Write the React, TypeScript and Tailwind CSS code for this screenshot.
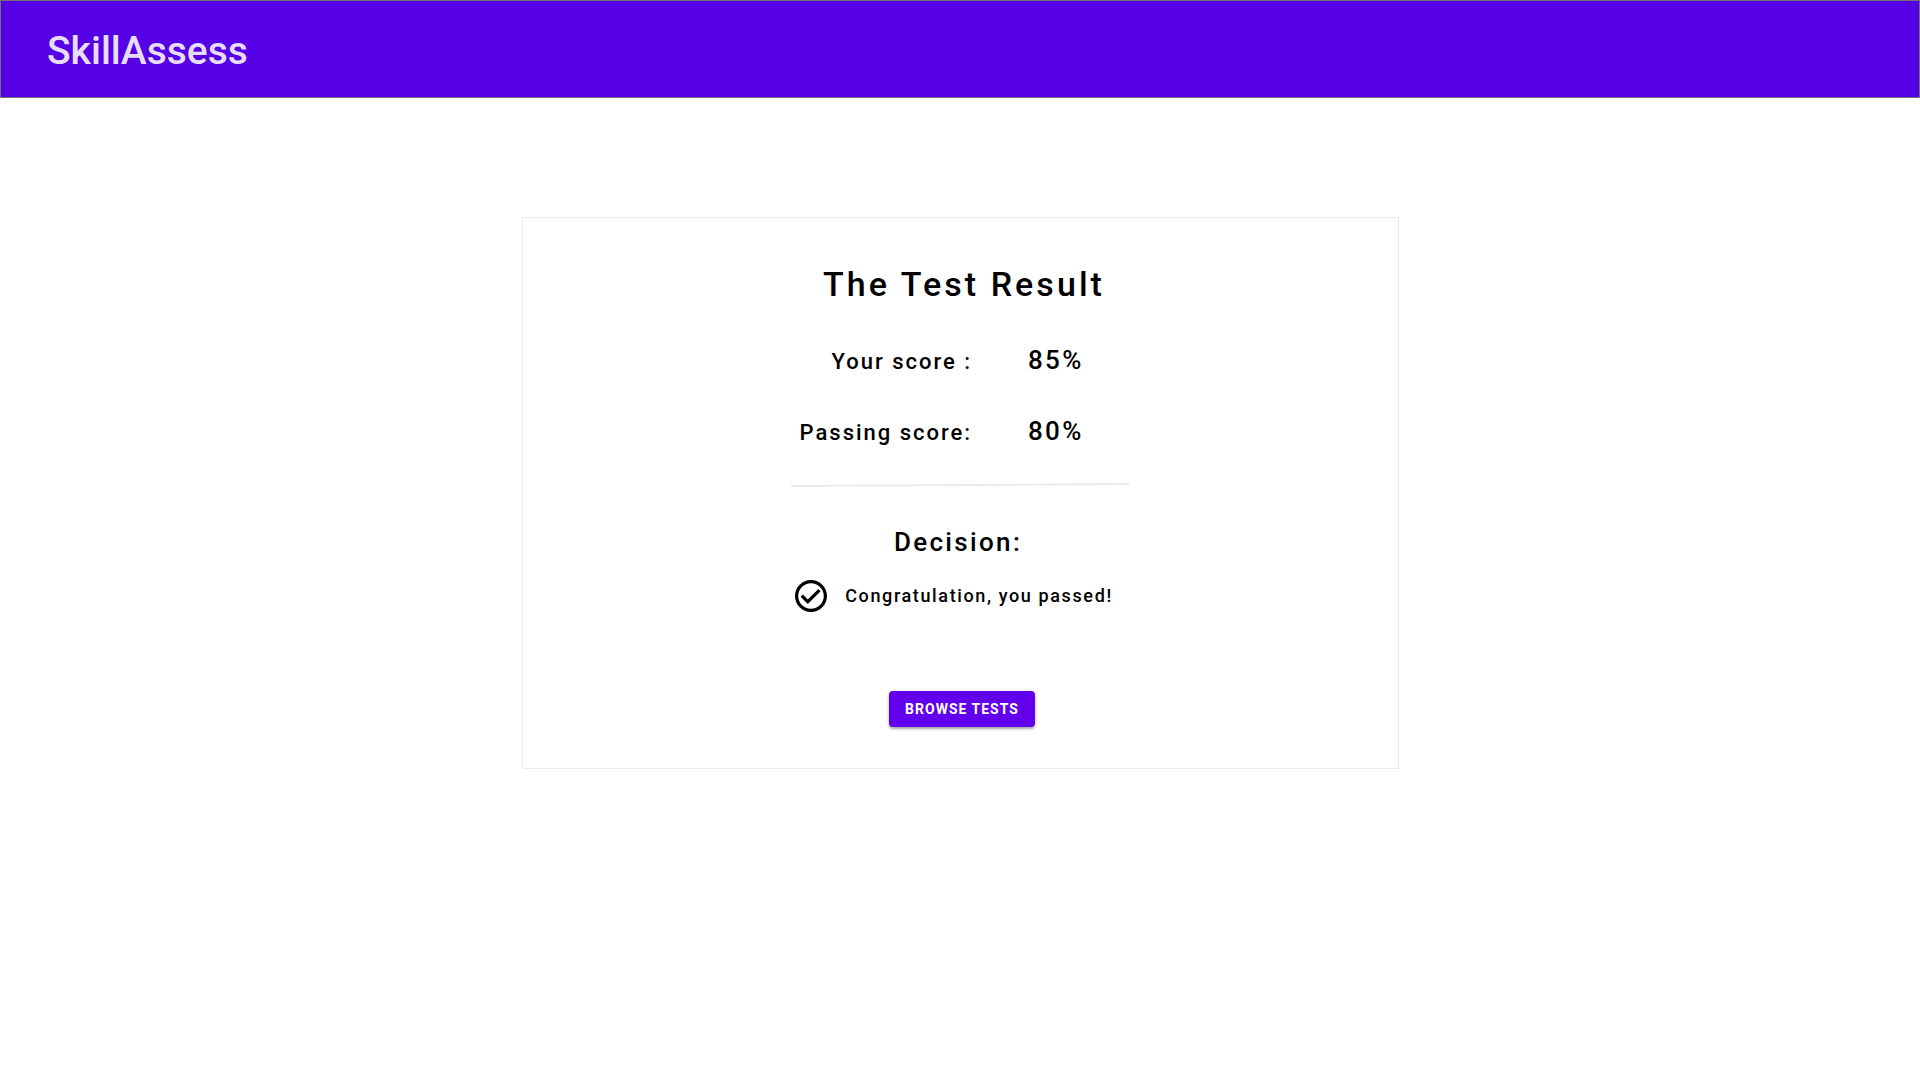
import React from "react";

type ScoreProps = { label: string; value: string };

function ScoreRow({ label, value }: ScoreProps) {
  return (
    <div className="grid grid-cols-2 items-baseline gap-x-14 leading-8">
      <dt className="justify-self-end whitespace-nowrap text-[22px] tracking-[0.09em]">{label}</dt>
      <dd className="text-[26px] tracking-[0.09em]">{value}</dd>
    </div>
  );
}

function CheckCircle() {
  return (
    <svg viewBox="2 2 20 20" className="size-8 shrink-0" fill="currentColor" aria-hidden="true">
      <path d="M12 2C6.48 2 2 6.48 2 12s4.48 10 10 10 10-4.48 10-10S17.52 2 12 2zm0 18c-4.41 0-8-3.59-8-8s3.59-8 8-8 8 3.59 8 8-3.59 8-8 8zm4.59-12.42L10 14.17l-3.08-3.09L5.5 12.5 10 17l8-8-1.41-1.42z" />
    </svg>
  );
}

export default function App() {
  return (
    <div className="min-h-screen bg-white font-['Roboto',sans-serif] font-medium text-black">
      <header className="flex h-[98px] items-center border border-[#707070] bg-[#5500e5] px-[46px] pt-1">
        <a href="#" className="text-[39px] leading-12 text-[#e8dcfc]">
          SkillAssess
        </a>
      </header>
      <main className="flex justify-center px-6 pt-[119px] pb-12">
        <section className="flex w-full max-w-[877px] flex-col items-center border border-[#ebebeb] bg-white px-6 pt-[46px] pb-[41px]">
          <h1 className="pl-2 text-[34px] leading-10 tracking-[0.09em]">The Test Result</h1>
          <dl className="mt-10 flex flex-col gap-[37px] pl-20">
            <ScoreRow label="Your score :" value="85%" />
            <ScoreRow label="Passing score:" value="80%" />
          </dl>
          <svg viewBox="0 0 338 6" className="mt-[33px] h-[6px] w-[338px]" aria-hidden="true">
            <line x1="0" y1="4" x2="338" y2="2" stroke="#ebebeb" strokeWidth="2" />
          </svg>
          <h2 className="mt-[34px] mr-1 text-[26px] leading-10 tracking-[0.09em]">Decision:</h2>
          <div className="mt-[18px] mr-3 flex items-center gap-[18px]">
            <CheckCircle />
            <p className="text-lg leading-8 tracking-[0.09em]">Congratulation, you passed!</p>
          </div>
          <button
            type="button"
            className="mt-[79px] ml-1 h-9 rounded bg-[#6200ee] px-4 text-sm font-bold tracking-[1px] text-white shadow-[0_2px_2px_rgba(0,0,0,0.25),0_1px_5px_rgba(0,0,0,0.15)]"
          >
            BROWSE TESTS
          </button>
        </section>
      </main>
    </div>
  );
}
